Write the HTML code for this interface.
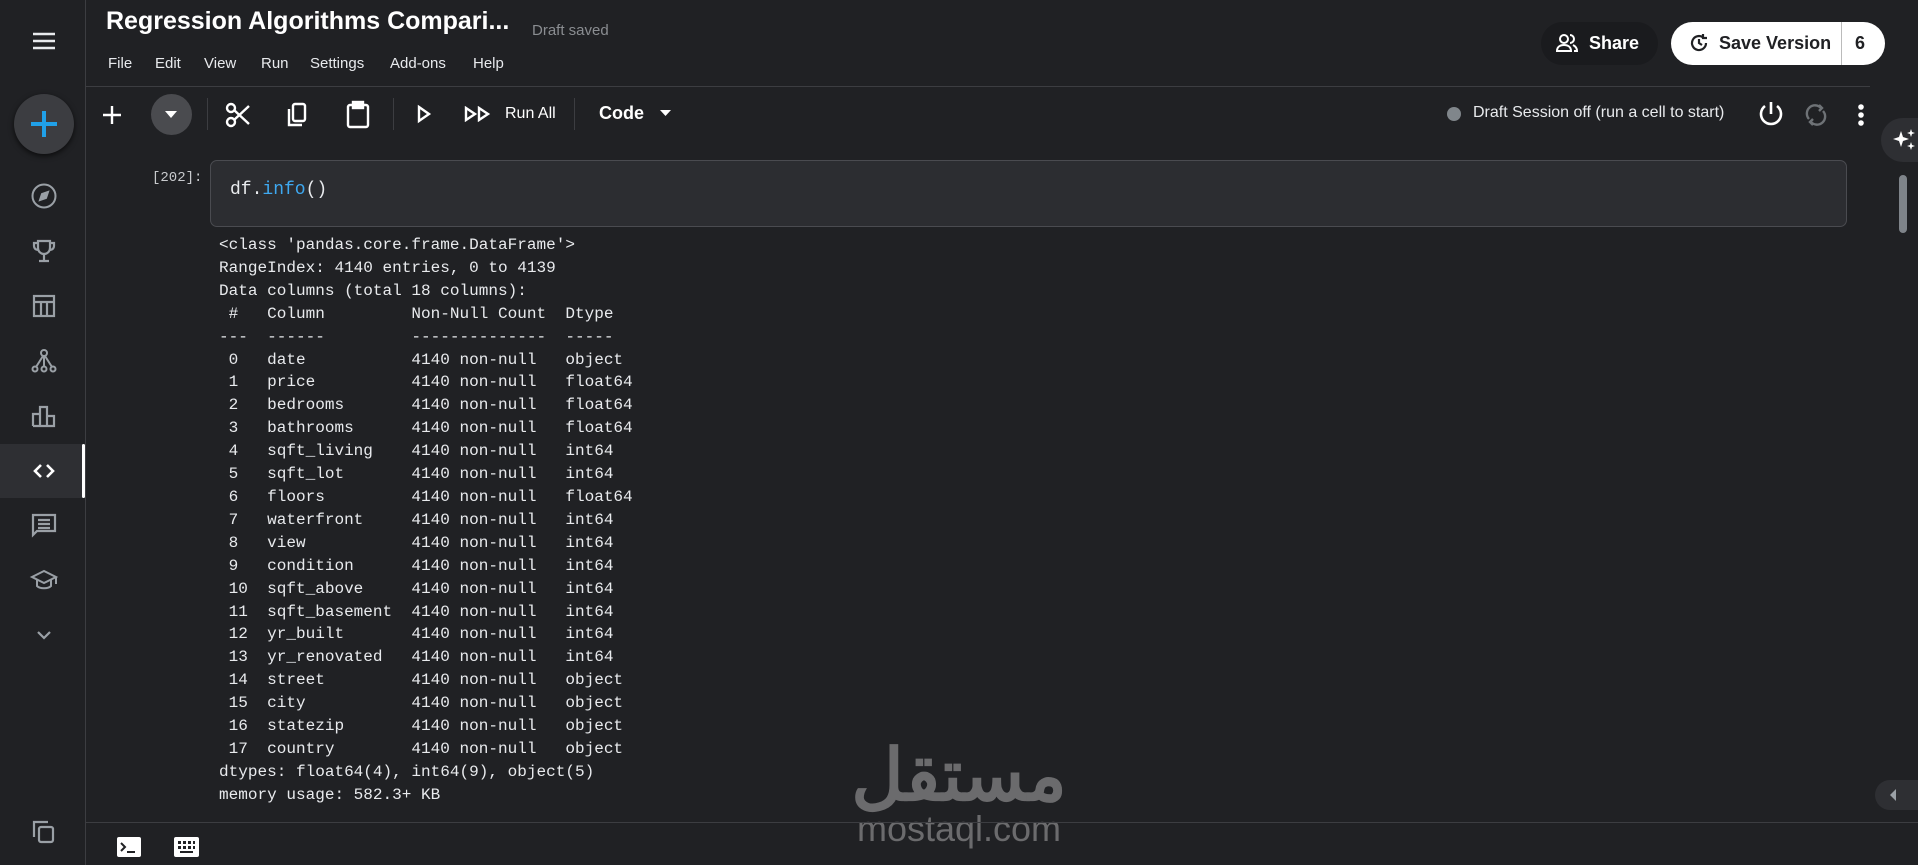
<!DOCTYPE html>
<html><head><meta charset="utf-8"><style>
*{margin:0;padding:0;box-sizing:border-box}
body{width:1918px;height:865px;background:#202124;color:#e8eaed;font-family:"Liberation Sans",sans-serif;position:relative;overflow:hidden}
.a{position:absolute;white-space:nowrap}
.side{left:0;top:0;width:86px;height:865px;border-right:1px solid #3c3d41;background:#202124}
.ic{position:absolute;left:29px;width:30px;height:30px}
svg{display:block}
.menu span{position:absolute;font-size:15px;color:#e8eaed;white-space:nowrap}
pre.a{font-family:"Liberation Mono",monospace;font-size:16.05px;line-height:22.9px;color:#e8eaed;white-space:pre}
.sep{position:absolute;width:1px;height:32px;top:98px;background:#3c3d41}
</style></head><body>
<div class="a side">
  <svg class="a" style="left:32px;top:32px" width="24" height="18" viewBox="0 0 24 18"><path d="M1 2h22M1 9h22M1 16h22" stroke="#e8eaed" stroke-width="2.6"/></svg>
  <div class="a" style="left:14px;top:94px;width:60px;height:60px;border-radius:50%;background:#3c3d41;box-shadow:0 2px 6px #000a"></div>
  <svg class="a" style="left:29px;top:109px" width="30" height="30" viewBox="0 0 30 30"><path d="M15 2v26M2 15h26" stroke="#20a0e8" stroke-width="4"/></svg>
  <svg class="ic" style="top:181px" viewBox="0 0 30 30" fill="none" stroke="#9aa0a6" stroke-width="2"><circle cx="15" cy="15" r="11.5"/><path d="M19 11l-6 2-2 6 6-2z" fill="#9aa0a6"/></svg>
  <svg class="ic" style="top:236px" viewBox="0 0 30 30" fill="none" stroke="#9aa0a6" stroke-width="2.2"><path d="M9 5h12v7a6 6 0 01-12 0zM9 7H5v3a4 4 0 004 4M21 7h4v3a4 4 0 01-4 4M15 18v6M10 25h10"/></svg>
  <svg class="ic" style="top:291px" viewBox="0 0 30 30" fill="none" stroke="#9aa0a6" stroke-width="2.2"><rect x="5" y="5" width="20" height="20"/><path d="M5 11h20M12 11v14M18 11v14"/></svg>
  <svg class="ic" style="top:346px" viewBox="0 0 30 30" fill="none" stroke="#9aa0a6" stroke-width="2"><circle cx="15" cy="7" r="3"/><circle cx="6" cy="23" r="2.5"/><circle cx="15" cy="23" r="2.5"/><circle cx="24" cy="23" r="2.5"/><path d="M15 10v10M14 10l-7 11M16 10l7 11"/></svg>
  <svg class="ic" style="top:401px" viewBox="0 0 30 30" fill="none" stroke="#9aa0a6" stroke-width="2.2"><path d="M4 25V13h7v12M11 25V6h7v19M18 25V15h7v10H4"/></svg>
  <div class="a" style="left:0;top:444px;width:85px;height:54px;background:#2e2f33"></div>
  <div class="a" style="left:82px;top:444px;width:3px;height:54px;background:#fff;border-radius:2px"></div>
  <svg class="ic" style="top:456px" viewBox="0 0 30 30" fill="none" stroke="#fff" stroke-width="2.6"><path d="M12 9l-6 6 6 6M18 9l6 6-6 6"/></svg>
  <svg class="ic" style="top:510px" viewBox="0 0 30 30" fill="none" stroke="#9aa0a6" stroke-width="2.2"><path d="M4 5h22v16H8l-4 4zM9 10h12M9 14h12M9 18h12"/></svg>
  <svg class="ic" style="top:565px" viewBox="0 0 30 30" fill="none" stroke="#9aa0a6" stroke-width="2"><path d="M15 6L3 12l12 6 12-6zM8 15v6c3 3 11 3 14 0v-6M27 12v7"/></svg>
  <svg class="ic" style="top:620px" viewBox="0 0 30 30" fill="none" stroke="#9aa0a6" stroke-width="2.2"><path d="M9 12l6 6 6-6"/></svg>
  <svg class="ic" style="top:817px" viewBox="0 0 30 30" fill="none" stroke="#9aa0a6" stroke-width="2.2"><path d="M5 20V5h14"/><rect x="10" y="10" width="14" height="15" rx="2"/></svg>
</div>

<div class="a" style="left:106px;top:7px;font-size:25px;font-weight:bold;color:#fff">Regression Algorithms Compari...</div>
<div class="a" style="left:532px;top:22px;font-size:15px;color:#8a8d91">Draft saved</div>
<div class="a menu" style="left:0;top:55px">
<span style="left:108px">File</span><span style="left:155px">Edit</span><span style="left:204px">View</span><span style="left:261px">Run</span><span style="left:310px">Settings</span><span style="left:390px">Add-ons</span><span style="left:473px">Help</span></div>

<div class="a" style="left:1541px;top:22px;width:117px;height:43px;border-radius:22px;background:#1a1b1e"></div>
<svg class="a" style="left:1556px;top:33px" width="22" height="20" viewBox="0 0 22 20" fill="none" stroke="#fff" stroke-width="2"><circle cx="8" cy="6" r="4"/><path d="M1 18c0-4 3-6 7-6s7 2 7 6zM14 2a4 4 0 010 8M17 12c2 1 4 3 4 6h-3"/></svg>
<div class="a" style="left:1589px;top:33px;font-size:18px;font-weight:bold;color:#fff">Share</div>
<div class="a" style="left:1671px;top:22px;width:214px;height:43px;border-radius:22px;background:#fff"></div>
<div class="a" style="left:1841px;top:22px;width:1px;height:43px;background:#bbb"></div>
<svg class="a" style="left:1689px;top:33px" width="20" height="20" viewBox="0 0 20 20" fill="none" stroke="#202124" stroke-width="2.2"><path d="M17 10a7 7 0 11-3-5.7"/><path d="M14 1v4h4M10 6v4l3 2"/></svg>
<div class="a" style="left:1719px;top:33px;font-size:18px;font-weight:bold;color:#202124">Save Version</div>
<div class="a" style="left:1855px;top:33px;font-size:18px;font-weight:bold;color:#202124">6</div>

<div class="a" style="left:86px;top:86px;width:1784px;height:1px;background:#3c3d41"></div>

<svg class="a" style="left:101px;top:104px" width="22" height="22" viewBox="0 0 22 22"><path d="M11 2v18M2 11h18" stroke="#fff" stroke-width="2.4"/></svg>
<div class="a" style="left:151px;top:94px;width:41px;height:41px;border-radius:50%;background:#4a4b4f"></div>
<svg class="a" style="left:164px;top:110px" width="14" height="9" viewBox="0 0 14 9"><path d="M1 1h12L7 8z" fill="#fff"/></svg>
<div class="sep" style="left:207px"></div>
<svg class="a" style="left:224px;top:101px" width="28" height="28" viewBox="0 0 28 28" fill="none" stroke="#fff" stroke-width="2.4"><circle cx="7" cy="21" r="4"/><circle cx="7" cy="7" r="4"/><path d="M10 9l15 14M10 19L25 5"/></svg>
<svg class="a" style="left:284px;top:101px" width="26" height="28" viewBox="0 0 26 28" fill="none" stroke="#fff" stroke-width="2.4"><path d="M5 8v16h13"/><rect x="9" y="3" width="12" height="17" rx="2"/></svg>
<svg class="a" style="left:345px;top:100px" width="26" height="30" viewBox="0 0 26 30" fill="none" stroke="#fff" stroke-width="2.4"><rect x="3" y="5" width="20" height="22" rx="2"/><rect x="8" y="2" width="10" height="6" fill="#fff"/></svg>
<div class="sep" style="left:393px"></div>
<svg class="a" style="left:416px;top:104px" width="16" height="20" viewBox="0 0 16 20"><path d="M3 3l10 7-10 7z" fill="none" stroke="#fff" stroke-width="2.4"/></svg>
<svg class="a" style="left:464px;top:106px" width="28" height="16" viewBox="0 0 28 16" fill="none" stroke="#fff" stroke-width="2.4"><path d="M2 2l9 6-9 6zM15 2l9 6-9 6z"/></svg>
<div class="a" style="left:505px;top:105px;font-size:16px;color:#fff">Run All</div>
<div class="sep" style="left:574px"></div>
<div class="a" style="left:599px;top:103px;font-size:18px;font-weight:bold;color:#fff">Code</div>
<svg class="a" style="left:660px;top:110px" width="11" height="7" viewBox="0 0 11 7"><path d="M0 0h11L5.5 6z" fill="#fff"/></svg>

<div class="a" style="left:1447px;top:107px;width:14px;height:14px;border-radius:50%;background:#80868b"></div>
<div class="a" style="left:1473px;top:104px;font-size:16px;color:#e8eaed">Draft Session off (run a cell to start)</div>
<svg class="a" style="left:1757px;top:100px" width="28" height="28" viewBox="0 0 28 28" fill="none" stroke="#fff" stroke-width="2.6"><path d="M14 2v12M8 6a10 10 0 1012 0"/></svg>
<svg class="a" style="left:1804px;top:102px" width="24" height="26" viewBox="0 0 24 26" fill="none" stroke="#6e7276" stroke-width="2.4"><path d="M5 17a8 8 0 0112-11M19 9a8 8 0 01-12 11M15 3l3 3-3 3M9 23l-3-3 3-3"/></svg>
<svg class="a" style="left:1857px;top:103px" width="8" height="24" viewBox="0 0 8 24" fill="#fff"><circle cx="4" cy="4" r="2.8"/><circle cx="4" cy="12" r="2.8"/><circle cx="4" cy="20" r="2.8"/></svg>
<div class="a" style="left:1881px;top:118px;width:37px;height:44px;border-radius:22px 0 0 22px;background:#2e2f33"></div>
<svg class="a" style="left:1892px;top:128px" width="26" height="24" viewBox="0 0 26 24" fill="#fff"><path d="M9 3l2 6 6 2-6 2-2 6-2-6-6-2 6-2z"/><path d="M19 1l1 3 3 1-3 1-1 3-1-3-3-1 3-1zM19 14l1 3 3 1-3 1-1 3-1-3-3-1 3-1z"/></svg>
<div class="a" style="left:1899px;top:175px;width:8px;height:58px;border-radius:4px;background:#7f848a"></div>
<div class="a" style="left:1875px;top:780px;width:43px;height:30px;border-radius:15px 0 0 15px;background:#2e2f33"></div>
<svg class="a" style="left:1888px;top:788px" width="10" height="14" viewBox="0 0 10 14"><path d="M8 1L2 7l6 6z" fill="#9aa0a6"/></svg>

<div class="a" style="left:152px;top:170px;font-family:'Liberation Mono',monospace;font-size:14px;color:#c8cacd">[202]:</div>
<div class="a" style="left:210px;top:160px;width:1637px;height:67px;border:1px solid #4a4b50;border-radius:7px;background:#2c2d31"></div>
<div class="a" style="left:230px;top:180px;font-family:'Liberation Mono',monospace;font-size:18px;color:#e8eaed">df.<span style="color:#3ea8f0">info</span>()</div>

<pre class="a" style="left:219px;top:234px">&lt;class 'pandas.core.frame.DataFrame'&gt;
RangeIndex: 4140 entries, 0 to 4139
Data columns (total 18 columns):
 #   Column         Non-Null Count  Dtype  
---  ------         --------------  -----  
 0   date           4140 non-null   object 
 1   price          4140 non-null   float64
 2   bedrooms       4140 non-null   float64
 3   bathrooms      4140 non-null   float64
 4   sqft_living    4140 non-null   int64  
 5   sqft_lot       4140 non-null   int64  
 6   floors         4140 non-null   float64
 7   waterfront     4140 non-null   int64  
 8   view           4140 non-null   int64  
 9   condition      4140 non-null   int64  
 10  sqft_above     4140 non-null   int64  
 11  sqft_basement  4140 non-null   int64  
 12  yr_built       4140 non-null   int64  
 13  yr_renovated   4140 non-null   int64  
 14  street         4140 non-null   object 
 15  city           4140 non-null   object 
 16  statezip       4140 non-null   object 
 17  country        4140 non-null   object 
dtypes: float64(4), int64(9), object(5)
memory usage: 582.3+ KB</pre>

<div class="a" style="left:844px;top:740px;width:230px;text-align:center;font-family:'Liberation Sans','Noto Sans CJK SC',sans-serif;font-size:72px;font-weight:bold;color:#6b6b6d;line-height:72px">مستقل</div>
<div class="a" style="left:844px;top:808px;width:230px;text-align:center;font-size:36px;color:#6b6b6d">mostaql.com</div>

<div class="a" style="left:86px;top:822px;width:1832px;height:1px;background:#3c3d41"></div>
<div class="a" style="left:117px;top:837px;width:24px;height:20px;background:#fff;border-radius:2px"></div>
<svg class="a" style="left:117px;top:837px" width="24" height="20" viewBox="0 0 24 20" fill="none" stroke="#202124" stroke-width="2"><path d="M4 6l4 4-4 4M10 15h8"/></svg>
<div class="a" style="left:174px;top:837px;width:25px;height:20px;background:#fff;border-radius:2px"></div>
<svg class="a" style="left:174px;top:837px" width="25" height="20" viewBox="0 0 25 20" fill="#202124"><rect x="4" y="4" width="3" height="3"/><rect x="9" y="4" width="3" height="3"/><rect x="14" y="4" width="3" height="3"/><rect x="19" y="4" width="2" height="3"/><rect x="4" y="9" width="3" height="3"/><rect x="9" y="9" width="3" height="3"/><rect x="14" y="9" width="3" height="3"/><rect x="19" y="9" width="2" height="3"/><rect x="6" y="14" width="13" height="2"/></svg>
</body></html>
